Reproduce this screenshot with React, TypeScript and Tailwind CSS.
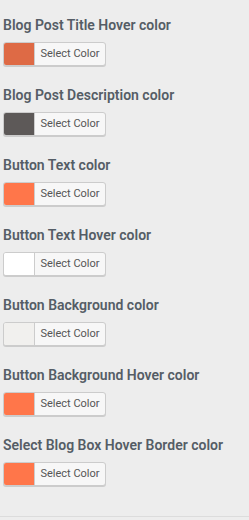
import React from 'react';

const settings = [
  { label: 'Blog Post Title Hover color', swatch: 'bg-[#de6a45]' },
  { label: 'Blog Post Description color', swatch: 'bg-[#5d5958]' },
  { label: 'Button Text color', swatch: 'bg-[#ff764a]' },
  { label: 'Button Text Hover color', swatch: 'bg-white' },
  { label: 'Button Background color', swatch: 'bg-[#f1f0ee]' },
  { label: 'Button Background Hover color', swatch: 'bg-[#ff764a]' },
  { label: 'Select Blog Box Hover Border color', swatch: 'bg-[#ff764a]' },
];

const ColorControl = ({ label, swatch }: { label: string; swatch: string }) => (
  <div className="h-[70px]">
    <div className="h-5 leading-5 text-[14px] font-semibold text-[#555d66] whitespace-nowrap">{label}</div>
    {/* Picker button */}
    <button className="mt-[7px] flex h-6 w-[103px] overflow-hidden rounded-[3px] border border-[#cccccc] bg-[#f7f7f7] shadow-[0_1px_0_#cccccc]">
      <span className={`h-full w-[31px] border-r border-[#cccccc] ${swatch}`} />
      <span className="flex-1 text-center text-[11px] leading-[22px] text-[#555555]">Select Color</span>
    </button>
  </div>
);

export default function App() {
  return (
    <div className="h-[520px] w-[249px] bg-[#ededed] overflow-hidden" style={{ fontFamily: 'Roboto, "Liberation Sans", sans-serif' }}>
      <div className="px-[3px] pt-[15px]">
        {settings.map(s => (
          <ColorControl key={s.label} label={s.label} swatch={s.swatch} />
        ))}
      </div>
      <div className="mt-[11px] border-b border-[#dcdcdc]" />
    </div>
  );
}
